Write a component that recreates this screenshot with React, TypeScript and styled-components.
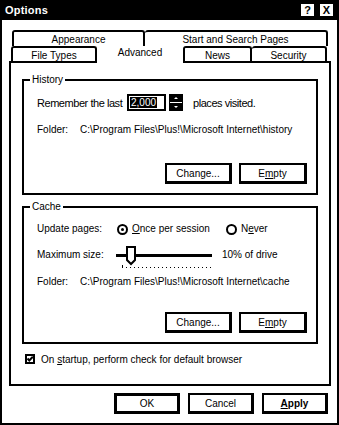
import React from 'react';
import styled, { createGlobalStyle } from 'styled-components';

const Global = createGlobalStyle`
  html, body { margin: 0; padding: 0; background: #fff; }
  body { font-family: "Liberation Sans", Arial, sans-serif; font-size: 10px; color: #000; }
  * { box-sizing: border-box; }
`;

const Window = styled.div`
  width: 339px;
  height: 425px;
  border: 2px solid #000;
  border-top: none;
  display: flex;
  flex-direction: column;
  background: #fff;
`;

const TitleBar = styled.div`
  height: 20px;
  flex: none;
  background: #000;
  color: #fff;
  display: flex;
  align-items: center;
  justify-content: space-between;
  padding: 0 4px 0 3px;
`;

const Title = styled.span`
  font-weight: bold;
  font-size: 11px;
  letter-spacing: 0.2px;
`;

const TitleButtons = styled.div`
  display: flex;
  gap: 6px;
`;

const TitleButton = styled.div`
  width: 13px;
  height: 12px;
  background: #fff;
  color: #000;
  font-weight: bold;
  font-size: 11px;
  line-height: 12px;
  text-align: center;
`;

const Content = styled.div`
  display: flex;
  flex-direction: column;
  padding: 10px 6px 0 7px;
`;

const TabRow = styled.div<{ $indent: number; $h: number }>`
  display: flex;
  align-items: flex-end;
  height: ${p => p.$h}px;
  margin-left: ${p => p.$indent}px;
  position: relative;
`;

const Tab = styled.div<{ $w: number; $noLeft?: boolean }>`
  width: ${p => p.$w}px;
  height: 100%;
  border: 2px solid #000;
  border-bottom: none;
  ${p => (p.$noLeft ? 'border-left: none;' : '')}
  border-radius: 3px 3px 0 0;
  display: flex;
  align-items: center;
  justify-content: center;
  font-size: 10px;
  padding-top: 1px;
  background: #fff;
`;

const ActiveTab = styled.div<{ $w: number }>`
  width: ${p => p.$w}px;
  height: 17px;
  margin-bottom: -2px;
  background: #fff;
  position: relative;
  z-index: 1;
  display: flex;
  align-items: center;
  justify-content: center;
  font-size: 10px;
  padding-bottom: 5px;
`;

const Panel = styled.div`
  height: 325px;
  border: 2px solid #000;
  display: flex;
  flex-direction: column;
  padding: 11px 11px 0 11px;
`;

const Group = styled.fieldset<{ $mt?: number }>`
  margin: ${p => p.$mt ?? 0}px 0 0 0;
  padding: 0;
  border: 2px solid #000;
  min-width: 0;
`;

const Legend = styled.legend`
  margin-left: 6px;
  padding: 0 2px;
  font-size: 10px;
  line-height: 12px;
`;

const GroupBody = styled.div<{ $pt: number }>`
  display: flex;
  flex-direction: column;
  padding: ${p => p.$pt}px 9px 9px 13px;
`;

const Row = styled.div<{ $mt?: number; $h?: number; $align?: string }>`
  display: flex;
  align-items: ${p => p.$align ?? 'center'};
  margin-top: ${p => p.$mt ?? 0}px;
  ${p => (p.$h ? `height: ${p.$h}px;` : '')}
  line-height: 12px;
  white-space: nowrap;
`;

const Label = styled.span<{ $w?: number; $big?: boolean; $mt?: number }>`
  ${p => (p.$w ? `width: ${p.$w}px; flex: none;` : '')}
  ${p => (p.$big ? 'font-size: 11px; letter-spacing: -0.45px;' : '')}
  ${p => (p.$mt ? `margin-top: ${p.$mt}px;` : '')}
`;

const EditBox = styled.div`
  width: 39px;
  height: 17px;
  border: 2px solid #000;
  display: flex;
  align-items: center;
  padding-left: 1px;
  font-size: 10px;
`;

const Selected = styled.span`
  background: #000;
  color: #fff;
  padding: 0 1px;
  line-height: 11px;
`;

const Spin = styled.svg`
  margin-left: 3px;
  margin-right: 10px;
  flex: none;
`;

const ButtonRow = styled.div<{ $mt: number }>`
  display: flex;
  justify-content: flex-end;
  gap: 7px;
  margin-top: ${p => p.$mt}px;
`;

const Button = styled.button<{ $w: number; $default?: boolean; $bold?: boolean }>`
  width: ${p => p.$w}px;
  height: 21px;
  border: ${p => (p.$default ? 3 : 2)}px solid #000;
  border-right-width: 3px;
  border-bottom-width: 3px;
  background: #fff;
  color: #000;
  padding: 0;
  font-family: "Liberation Sans", Arial, sans-serif;
  font-size: 10px;
  font-weight: ${p => (p.$bold ? 'bold' : 'normal')};
`;

const Radio = styled.span<{ $on?: boolean }>`
  width: 11px;
  height: 11px;
  border: 2px solid #000;
  border-radius: 50%;
  flex: none;
  display: flex;
  align-items: center;
  justify-content: center;
  margin-right: 4px;
  &::after {
    content: '';
    width: 3px;
    height: 3px;
    border-radius: 50%;
    background: ${p => (p.$on ? '#000' : 'transparent')};
  }
`;

const RadioOption = styled.span<{ $w?: number }>`
  display: flex;
  align-items: center;
  ${p => (p.$w ? `width: ${p.$w}px;` : '')}
`;

const Slider = styled.svg`
  flex: none;
  margin-right: 10px;
`;

const CheckRow = styled.div`
  display: flex;
  align-items: center;
  margin: 9px 0 0 3px;
  height: 12px;
  white-space: nowrap;
`;

const CheckBox = styled.svg`
  flex: none;
  margin-right: 6px;
`;

const FooterButtons = styled.div`
  display: flex;
  justify-content: flex-end;
  gap: 8px;
  margin: 7px 3px 0 0;
`;

export default function App() {
  const ticks = [] as number[];
  for (let x = 6; x <= 94; x += 4) ticks.push(x);
  return (
    <>
      <Global />
      <Window>
        <TitleBar>
          <Title>Options</Title>
          <TitleButtons>
            <TitleButton>?</TitleButton>
            <TitleButton>X</TitleButton>
          </TitleButtons>
        </TitleBar>
        <Content>
          <TabRow $indent={3} $h={16}>
            <Tab $w={133}>Appearance</Tab>
            <Tab $w={183} $noLeft>Start and Search Pages</Tab>
          </TabRow>
          <TabRow $indent={2} $h={15}>
            <Tab $w={86}>File Types</Tab>
            <ActiveTab $w={86}>Advanced</ActiveTab>
            <Tab $w={69}>News</Tab>
            <Tab $w={75} $noLeft>Security</Tab>
          </TabRow>
          <Panel>
            <Group>
              <Legend>History</Legend>
              <GroupBody $pt={8}>
                <Row $h={17}>
                  <Label $w={90} $big>Remember the last</Label>
                  <EditBox>
                    <Selected>2,000</Selected>
                  </EditBox>
                  <Spin width="14" height="17" viewBox="0 0 14 17">
                    <rect x="0" y="0" width="14" height="17" fill="#000" />
                    <rect x="1" y="8" width="12" height="1" fill="#fff" />
                    <path d="M7 3 L9 5 L5 5 Z" fill="#fff" />
                    <path d="M5 12 L9 12 L7 14 Z" fill="#fff" />
                  </Spin>
                  <Label $big>places visited.</Label>
                </Row>
                <Row $mt={13}>
                  <Label $w={43}>Folder:</Label>
                  <Label>C:\Program Files\Plus!\Microsoft Internet\history</Label>
                </Row>
                <ButtonRow $mt={27}>
                  <Button $w={67}>
                    Chan<u>g</u>e...
                  </Button>
                  <Button $w={68}>
                    E<u>m</u>pty
                  </Button>
                </ButtonRow>
              </GroupBody>
            </Group>
            <Group $mt={6}>
              <Legend>Cache</Legend>
              <GroupBody $pt={10}>
                <Row $h={12}>
                  <Label $w={80}>Update pages:</Label>
                  <RadioOption $w={109}>
                    <Radio $on />
                    <span>
                      <u>O</u>nce per session
                    </span>
                  </RadioOption>
                  <RadioOption>
                    <Radio />
                    <span>
                      N<u>e</u>ver
                    </span>
                  </RadioOption>
                </Row>
                <Row $mt={10} $h={24} $align="flex-start">
                  <Label $w={79} $mt={4}>
                    Maximum size:
                  </Label>
                  <Slider width="96" height="24" viewBox="0 0 96 24">
                    <rect x="0" y="9" width="96" height="3" fill="#000" />
                    {ticks.map(x => (
                      <rect key={x} x={x} y={x === 6 ? 20 : 22} width="1" height={x === 6 ? 3 : 1} fill="#000" />
                    ))}
                    <path d="M11 2 H19 V15 L15 19 L11 15 Z" fill="#fff" stroke="#000" strokeWidth="2" />
                  </Slider>
                  <Label $mt={4}>10% of drive</Label>
                </Row>
                <Row $mt={7}>
                  <Label $w={43}>Folder:</Label>
                  <Label>C:\Program Files\Plus!\Microsoft Internet\cache</Label>
                </Row>
                <ButtonRow $mt={24}>
                  <Button $w={67}>
                    Chan<u>g</u>e...
                  </Button>
                  <Button $w={68}>
                    E<u>m</u>pty
                  </Button>
                </ButtonRow>
              </GroupBody>
            </Group>
            <CheckRow>
              <CheckBox width="10" height="10" viewBox="0 0 10 10">
                <rect x="1" y="1" width="8" height="8" fill="#fff" stroke="#000" strokeWidth="2" />
                <path d="M2.5 4.5 L4.3 6.5 L7.8 2.8" fill="none" stroke="#000" strokeWidth="2" />
              </CheckBox>
              <span>
                On <u>s</u>tartup, perform check for default browser
              </span>
            </CheckRow>
          </Panel>
          <FooterButtons>
            <Button $w={66} $default>
              OK
            </Button>
            <Button $w={66}>Cancel</Button>
            <Button $w={66} $bold>
              <u>A</u>pply
            </Button>
          </FooterButtons>
        </Content>
      </Window>
    </>
  );
}
